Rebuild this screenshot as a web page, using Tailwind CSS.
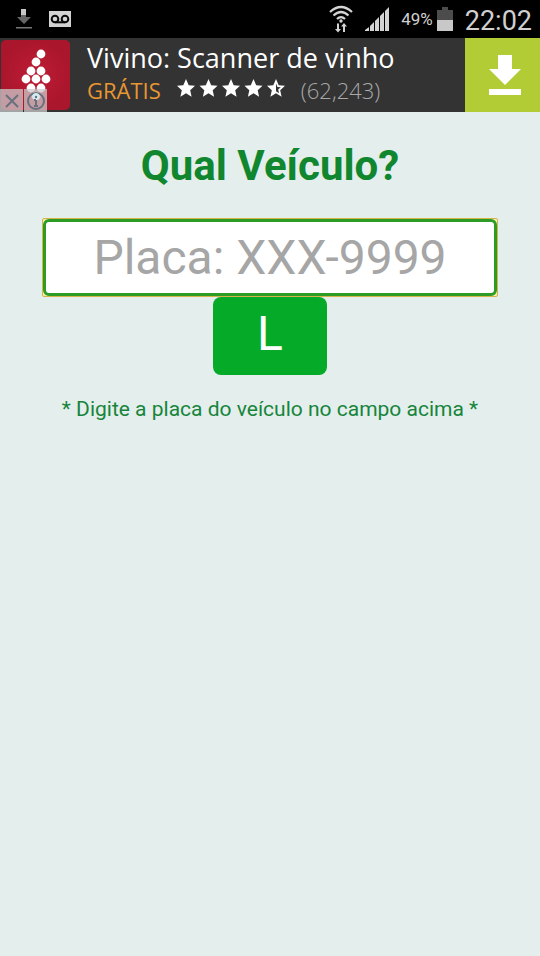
<!DOCTYPE html>
<html lang="pt-BR">
<head>
<meta charset="utf-8">
<meta name="viewport" content="width=device-width, initial-scale=1">
<title>Qual Veículo?</title>
<script src="https://cdn.jsdelivr.net/npm/@tailwindcss/browser@4"></script>
</head>
<body class="min-h-screen bg-[#e4eeed] font-['Roboto',sans-serif]">
<header class="flex h-[38px] items-center justify-between bg-black pr-2 pl-4 text-[#d0d0d0]">
  <div class="flex items-center gap-[17px]">
    <svg class="h-5 w-4" viewBox="0 0 16 20" aria-hidden="true"><path d="M5 0h5v7H5z" fill="#c8c8c8"/><path d="M5 6h5v2h5l-7 7-7-7h4z" fill="#666"/><path d="M0 18h16v1.500H0z" fill="#777"/></svg>
    <svg class="h-4 w-[22px]" viewBox="0 0 22 16" aria-hidden="true"><path d="M0 0h22v16H0z" fill="#d2d2d2"/><g fill="none" stroke="#080808" stroke-width="2"><circle cx="6" cy="8" r="3.300"/><circle cx="16" cy="8" r="3.300"/><path d="M6 11.300h10"/></g></svg>
  </div>
  <div class="flex items-center">
    <svg class="mr-3 h-7 w-6" viewBox="0 0 24 28" aria-hidden="true"><g fill="none" stroke="#d4d4d4" stroke-width="2.200"><path d="M1 7Q12-3 23 7"/><path d="M4.500 10.500Q12 3.500 19.500 10.500"/><path d="M8 14Q12 10 16 14"/></g><circle cx="12" cy="16" r="1.700" fill="#d4d4d4"/><path d="M8 18.500h2V24h2l-3 3.500L6 24h2zM14 27h2v-5.500h2L15 18l-3 3.500h2z" fill="#d4d4d4"/></svg>
    <svg class="mr-3 h-6 w-6" viewBox="0 0 24 24" fill="#d4d4d4" aria-hidden="true"><path d="M0 24v-1l4-3v4zM5 24v-5l4-4v9zM10 24V14l4-4v14zM15 24V9l4-4v19zM20 24V4l4-4v24z"/></svg>
    <span class="mr-1 text-[17px] leading-5">49%</span>
    <svg class="mr-3 h-6 w-4" viewBox="0 0 16 24" aria-hidden="true"><path d="M5 0h6v3h5v10H0V3h5z" fill="#4c4c4c"/><path d="M0 13h16v11H0z" fill="#c8c8c8"/></svg>
    <time class="pt-1 text-[27px] leading-8">22:02</time>
  </div>
</header>

<aside class="relative flex h-[74px] items-stretch bg-[#333] font-['Open_Sans',sans-serif]">
  <div class="flex w-[87px] shrink-0 items-center">
    <svg class="size-[70px]" viewBox="0 0 70 70" role="img" aria-label="Vivino"><defs><radialGradient id="wine"><stop stop-color="#be1c35"/><stop offset="1" stop-color="#aa162c"/></radialGradient></defs><rect x="1" width="69" height="70" rx="5" fill="url(#wine)"/><g fill="#fff"><circle cx="41" cy="14" r="4.400"/><circle cx="36" cy="22" r="4.400"/><circle cx="31" cy="31" r="4.400"/><circle cx="41" cy="31" r="4.400"/><circle cx="26" cy="39" r="4.400"/><circle cx="36" cy="39" r="4.400"/><circle cx="46" cy="39" r="4.400"/><circle cx="31" cy="48" r="4.400"/><circle cx="41" cy="48" r="4.400"/><circle cx="36" cy="56" r="4.400"/></g></svg>
  </div>
  <div class="flex min-w-0 flex-1 flex-col pt-1">
    <h2 class="text-[27px] leading-8 whitespace-nowrap text-white">Vivino: Scanner de vinho</h2>
    <p class="flex items-center text-[22px] leading-8 whitespace-nowrap">
      <span class="mr-4 text-[#e99732]">GRÁTIS</span>
      <svg class="mr-4 mb-1 h-[18px] w-[108px]" viewBox="0 0 108 18" fill="#fff" role="img" aria-label="4,5 estrelas"><defs><path id="star" d="M9 0l2.700 6.200 6.300.6-4.800 4.400 1.400 6.500L9 14.300l-5.600 3.400 1.400-6.500L0 6.800l6.300-.6z"/></defs><use href="#star"/><use href="#star" x="22.500"/><use href="#star" x="45"/><use href="#star" x="67.500"/><path fill-rule="evenodd" d="M99 0l2.700 6.200 6.300.6-4.800 4.400 1.400 6.500-5.600-3.400-5.600 3.400 1.400-6.500L90 6.800l6.300-.6zM99 4.500v7.800l3 1.900-.8-3.700 2.600-2.300-3.300-.3z"/></svg>
      <span class="font-light text-[#a8a8a8]">(62,243)</span>
    </p>
  </div>
  <button type="button" aria-label="Baixar" class="flex w-[75px] shrink-0 items-center justify-center bg-[#b1cc35] pl-1">
    <svg class="h-10 w-8" viewBox="0 0 32 40" fill="#fff" aria-hidden="true"><path d="M9 0h14v14h9L16 30 0 14h9zM0 34h32v6H0z"/></svg>
  </button>
  <div class="absolute bottom-0 left-0 flex gap-px">
    <button type="button" aria-label="Fechar anúncio" class="flex size-[23px] items-center justify-center bg-[#cbcbcb]/75"><svg class="size-3.5" viewBox="0 0 14 14" fill="none" stroke="#69717e" stroke-width="2" aria-hidden="true"><path d="M1 1l12 12M13 1L1 13"/></svg></button>
    <button type="button" aria-label="Sobre este anúncio" class="flex size-[23px] items-center justify-center bg-[#cbcbcb]/75"><svg class="size-[18px]" viewBox="0 0 18 18" fill="none" aria-hidden="true"><circle cx="9" cy="9" r="8" stroke="#69717e" stroke-width="2"/><circle cx="9" cy="4.500" r="3.500" fill="#d6eaf2"/><path d="M9 8v6M7 8h2M7 14h4" stroke="#69717e" stroke-width="2"/><circle cx="9" cy="5" r="1.200" fill="#69717e"/></svg></button>
  </div>
</aside>

<main class="px-[42px] pt-7 text-center">
  <h1 class="text-[42px] leading-[52px] font-bold text-[#10862f]"><label for="placa">Qual Veículo?</label></h1>
  <form class="mt-[26px] flex flex-col items-center">
    <div class="w-full rounded-xs border border-[#d5b548] bg-[#f3efad]">
      <input id="placa" type="text" placeholder="Placa: XXX-9999" aria-describedby="ajuda" class="block h-[77px] w-full rounded-md border-3 border-[#2c9c27] bg-white text-center text-5xl outline-none placeholder:text-[#a6a6a6]">
    </div>
    <button type="button" class="h-[78px] w-[114px] rounded-lg bg-[#06aa29] pb-1 text-5xl text-white">L</button>
  </form>
  <p id="ajuda" class="mt-5 text-[21px] leading-7 whitespace-nowrap text-[#16853b]">* Digite a placa do veículo no campo acima *</p>
</main>
</body>
</html>
